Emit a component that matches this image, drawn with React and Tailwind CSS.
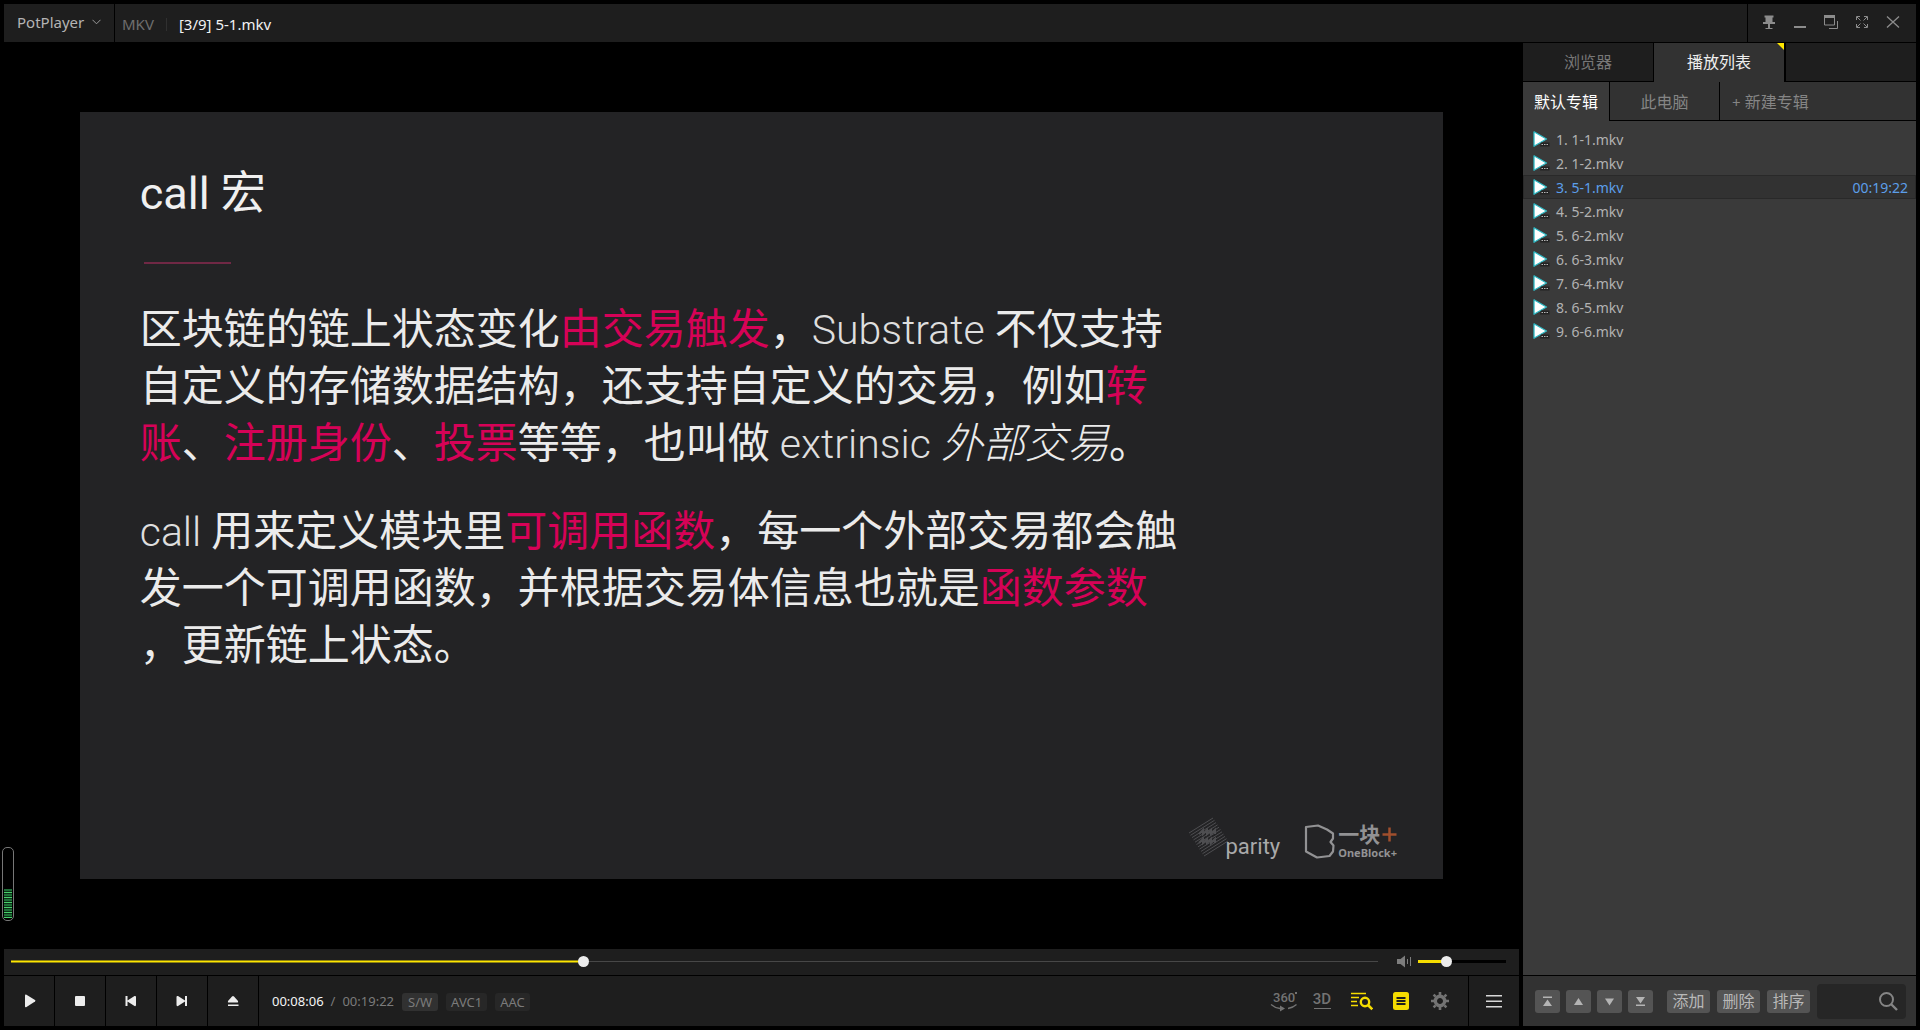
import { useState } from "react";

const UI = "font-['Noto_Sans','Noto_Sans_CJK_SC',sans-serif]";

const files = ["1-1.mkv", "1-2.mkv", "5-1.mkv", "5-2.mkv", "6-2.mkv", "6-3.mkv", "6-4.mkv", "6-5.mkv", "6-6.mkv"];
const CURRENT = 2;

function TitleButton({ label, children }) {
  return (
    <button type="button" aria-label={label} className="flex w-[31px] items-center justify-center text-[#8c8c8c]">
      <svg width="16" height="16" viewBox="0 0 16 16" fill="none" stroke="currentColor">
        {children}
      </svg>
    </button>
  );
}

function TitleBar() {
  return (
    <header className="flex h-[38px] gap-px">
      <button type="button" className="flex w-[110px] items-center gap-2 bg-[#1e1e1e] pb-0.5 pl-[13px] text-[15px] font-normal text-[#b4b4b4]">
        PotPlayer
        <svg width="9" height="6" viewBox="0 0 9 6" fill="none" stroke="#9a9a9a">
          <path d="M.5.8l4 4 4-4" />
        </svg>
      </button>
      <div className="flex flex-1 items-center bg-[#1e1e1e] pt-0.5 pl-[7px] text-[15px]">
        <span className="text-[#6e6e6e]">MKV</span>
        <span className="mx-3 h-[13px] w-px bg-[#303030]" />
        <h1 className="text-[#f2f2f2]">[3/9] 5-1.mkv</h1>
      </div>
      <div className="flex w-[168px] justify-end bg-[#1e1e1e] pr-2 pb-0.5">
        <TitleButton label="置顶">
          <path d="M3.500 1.500h9v2h-1v4.500h2.500v2H2v-2h2.500v-4.500h-1zM7 10h2v4H7zM4.500 14h7v1h-7z" fill="currentColor" stroke="none" />
        </TitleButton>
        <TitleButton label="最小化">
          <path d="M2 13h12" strokeWidth="2" />
        </TitleButton>
        <TitleButton label="还原">
          <path d="M1.500 3v8h10V3" />
          <path d="M1 2.500h11" strokeWidth="3" />
          <path d="M14.500 7v7.500H6" />
        </TitleButton>
        <TitleButton label="全屏">
          <path d="M2.500 6V2.500H6M10 2.500h3.500V6M13.500 10v3.500H10M6 13.500H2.500V10" />
          <path d="M3 3l3.500 3.500M13 3L9.500 6.500M13 13L9.500 9.500M3 13l3.500-3.500" />
        </TitleButton>
        <TitleButton label="关闭">
          <path d="M2 2.500l12 11M14 2.500l-12 11" strokeWidth="1.300" />
        </TitleButton>
      </div>
    </header>
  );
}

function Hot({ children }) {
  return <span className="text-[#d60257]">{children}</span>;
}

function Latin({ children }) {
  return <span className="text-[41px] leading-none font-light text-[#dedede]">{children}</span>;
}

function ParityLogo() {
  return (
    <div className="flex items-start">
      <svg width="40" height="40" viewBox="0 0 40 40" fill="none" stroke="#4e4e51">
        <path d="M1 16L25 1M2.500 18.300l24-15M4 20.600l24-15M5.500 22.900l24-15M7 25.200l24-15M8.500 27.500l24-15M10 29.800l24-15M11.500 32.100l24-15M13 34.400l24-15M14.500 36.700l24-15M16 39l24-15" />
        <path d="M11 17l4-4v4l4-4v4l4-4v4l4-4v4M11 26l4-4v4l4-4v4l4-4v4l4-4v4" strokeWidth="2" />
      </svg>
      <span className="-ml-0.5 pt-4 font-[Roboto] text-[22px] leading-7 text-[#a9a9aa]">parity</span>
    </div>
  );
}

function OneBlockLogo() {
  return (
    <div className="flex items-center gap-0.5 pt-[6px] font-['Noto_Sans','Noto_Sans_CJK_SC',sans-serif] font-bold text-[#929294]">
      <svg width="32" height="35" viewBox="0 0 32 35" fill="none" stroke="#929294" strokeWidth="2.200" strokeLinejoin="round">
        <path d="M2 3l12-1.500 9 4L29 9.500v5L26.500 18l3 3.500-.5 6-3.500 4.500-12.500 1.500L2 27.500z" />
      </svg>
      <div className="pt-0.5">
        <div className="flex h-5 items-center text-[21px]">
          一块
          <svg className="ml-0.5" width="15" height="15" viewBox="0 0 15 15" stroke="#a04f2d" strokeWidth="2.500">
            <path d="M7.500.5v14M.5 7.500h14" />
          </svg>
        </div>
        <div className="text-[11px] leading-4">OneBlock+</div>
      </div>
    </div>
  );
}

function Slide() {
  return (
    <article className="flex aspect-video w-[90%] flex-col bg-[#232325] pt-[54px] pr-[46px] pb-[18px] pl-[60px] font-[Roboto,'Noto_Sans_CJK_SC',sans-serif] whitespace-nowrap">
      <h2 className="pt-0.5 text-[45px] leading-[52px] text-[#f0f0f0]">call 宏</h2>
      <hr className="mt-[42px] ml-1 h-0.5 w-[87px] border-0 bg-[#702845]" />
      <p className="mt-[37px] text-[42px] leading-[57px] text-[#ebebeb]">
        区块链的链上状态变化<Hot>由交易触发</Hot>，<Latin>Substrate </Latin>不仅支持
        <br />
        自定义的存储数据结构，还支持自定义的交易，例如<Hot>转</Hot>
        <br />
        <Hot>账</Hot>、<Hot>注册身份</Hot>、<Hot>投票</Hot>等等，也叫做<Latin> extrinsic </Latin><em className="font-light">外部交易</em>。
      </p>
      <p className="mt-[31px] text-[42px] leading-[57px] text-[#ebebeb]">
        <Latin>call </Latin>用来定义模块里<Hot>可调用函数</Hot>，每一个外部交易都会触
        <br />
        发一个可调用函数，并根据交易体信息也就是<Hot>函数参数</Hot>
        <br />
        ，更新链上状态。
      </p>
      <footer className="mt-auto flex items-start justify-end gap-6">
        <ParityLogo />
        <OneBlockLogo />
      </footer>
    </article>
  );
}

function Slider({ label, value, onChange, max, fill, track }) {
  return (
    <div className="grid flex-1 items-center">
      <div className={`${track} col-start-1 row-start-1`} />
      <div className={`${fill} col-start-1 row-start-1`} style={{ width: `${(value / max) * 100}%` }} />
      <input
        type="range"
        aria-label={label}
        min="0"
        max={max}
        value={value}
        onChange={(e) => onChange(Number(e.target.value))}
        className="col-start-1 row-start-1 h-[11px] w-full appearance-none bg-transparent [&::-webkit-slider-thumb]:size-[11px] [&::-webkit-slider-thumb]:appearance-none [&::-webkit-slider-thumb]:rounded-full [&::-webkit-slider-thumb]:bg-[#ececec]"
      />
    </div>
  );
}

function SeekRow() {
  const [time, setTime] = useState(486);
  const [volume, setVolume] = useState(30);
  return (
    <div className="flex h-[26px] items-center bg-[#1e1e1e] pr-[13px] pb-0.5 pl-[7px]">
      <Slider label="进度" value={time} onChange={setTime} max={1162} fill="h-[3px] border-y border-[#8d8310] bg-[#ffe600]" track="h-px bg-[#474747]" />
      <button type="button" aria-label="静音" className="mr-1.5 ml-[18px]">
        <svg width="16" height="13" viewBox="0 0 16 13" fill="#7d7d7d">
          <path d="M1 4h3.500L9 .5v12L4.500 9H1zM11 4h1v5h-1zM14 2h1v9h-1z" />
        </svg>
      </button>
      <div className="flex w-22">
        <Slider label="音量" value={volume} onChange={setVolume} max={100} fill="h-[3px] bg-[#f5dc00]" track="h-[3px] bg-black" />
      </div>
    </div>
  );
}

const transport = [
  ["播放", "M5 3.500Q5 2 6.500 2.700L15 8q1 .8 0 1.600L6.500 15Q5 15.600 5 14.500z"],
  ["停止", "M5 4h8q1 0 1 1v8q0 1-1 1H5q-1 0-1-1V5q0-1 1-1z"],
  ["上一个", "M3.500 4h2v4.500L12.500 4q1.500-.5 1.500 1v8q0 1.500-1.500 1L5.500 9.500V14H3.500z"],
  ["下一个", "M14 4h-2v4.500L5 4Q3.500 3.500 3.500 5v8q0 1.500 1.500 1l7-4.500V14h2z"],
  ["打开", "M9 4q.5 0 1 .5l4 4.500q.5 1.500-.5 1.500h-9Q3.500 10.500 4 9l4-4.500q.5-.5 1-.5zM4 12.500h10.500v1.500H4z"],
];

function ToolButton({ label, children }) {
  return (
    <button type="button" aria-label={label} className="flex w-[39px] items-center justify-center">
      {children}
    </button>
  );
}

function Controls() {
  return (
    <div className="flex h-[50px] gap-px">
      {transport.map(([label, d]) => (
        <button key={label} type="button" aria-label={label} className="flex w-[50px] items-center justify-center bg-[#1e1e1e]">
          <svg width="18" height="18" viewBox="0 0 18 18" fill="#ececec">
            <path d={d} />
          </svg>
        </button>
      ))}
      <div className="flex flex-1 items-center bg-[#1e1e1e] pt-0.5 pl-[13px] text-[13px] text-[#7b7b7b]">
        <time className="text-[#f5f5f5]">00:08:06</time>
        <span className="mx-[7px]">/</span>
        <time>00:19:22</time>
        <span className="ml-2 rounded-[3px] bg-[#313131] px-1.5 leading-[18px]">S/W</span>
        <span className="ml-2 rounded-[3px] bg-[#272727] px-[5px] leading-[18px]">AVC1</span>
        <span className="ml-2 rounded-[3px] bg-[#272727] px-[5px] leading-[18px]">AAC</span>
      </div>
      <div className="-ml-px flex bg-[#1e1e1e] pr-[9px] text-[#737373]">
        <ToolButton label="360°">
          <svg width="28" height="22" viewBox="0 0 28 22" fill="none" stroke="currentColor">
            <text x="3" y="12" fontSize="13" fontFamily="Roboto" fontWeight="500" fill="currentColor" stroke="none">360</text>
            <rect x="25" y="2" width="2" height="2" fill="currentColor" stroke="none" />
            <path d="M1 14.500q4 3.500 9 4M18 18.500q5-.8 8.500-4" strokeWidth="1.300" />
            <path d="M10 15.500l5 3-5 3z" fill="currentColor" stroke="none" />
          </svg>
        </ToolButton>
        <ToolButton label="3D">
          <svg width="20" height="22" viewBox="0 0 20 22">
            <text x="9" y="14" textAnchor="middle" fontSize="15" fontFamily="Roboto" fontWeight="500" fill="currentColor">3D</text>
            <path d="M1 18h17v1H1z" fill="currentColor" />
          </svg>
        </ToolButton>
        <ToolButton label="搜索列表">
          <svg width="22" height="20" viewBox="0 0 22 20" fill="none" stroke="#f5dc00">
            <path d="M0 2.500h15M0 6.500h8M0 10.500h6M0 14.500h7" strokeWidth="1.300" />
            <circle cx="14" cy="11" r="4.200" strokeWidth="2.400" />
            <path d="M17 14l4.300 4.300" strokeWidth="2.600" />
          </svg>
        </ToolButton>
        <ToolButton label="播放列表">
          <svg width="16" height="18" viewBox="0 0 16 18">
            <rect width="16" height="18" rx="2.500" fill="#f5dc00" />
            <path d="M3.500 6h9M3.500 9h9M3.500 12h9" stroke="#1e1e1e" strokeWidth="2" />
          </svg>
        </ToolButton>
        <ToolButton label="设置">
          <svg width="18" height="18" viewBox="-9 -9 18 18" fill="none" stroke="currentColor">
            <circle r="4.700" strokeWidth="3.400" />
            <path d="M0-9v3M0 9v-3M-9 0h3M9 0h-3M-6.400-6.400l2 2M6.400 6.400l-2-2M-6.400 6.400l2-2M6.400-6.400l-2 2" strokeWidth="2.600" />
          </svg>
        </ToolButton>
      </div>
      <button type="button" aria-label="菜单" className="flex w-[50px] items-center justify-center bg-[#1e1e1e]">
        <svg width="16" height="14" viewBox="0 0 16 14" fill="#d8d8d8">
          <path d="M0 1h16v1.500H0zM0 6.500h16V8H0zM0 12h16v1.500H0z" />
        </svg>
      </button>
    </div>
  );
}

function FileIcon() {
  return (
    <svg width="17" height="16" viewBox="0 0 17 16">
      <path d="M1 .8L13.500 8 1 15.200z" fill="#fff" stroke="#2fb9c4" strokeWidth="1.300" strokeLinejoin="round" />
      <path d="M8 11.500h8.500v4H7z" fill="#222" />
      <path d="M8.500 13.500h7" stroke="#b5b5b5" strokeDasharray="1.500 1" />
    </svg>
  );
}

const moves = [
  ["移到顶部", "M3 2.500h9V4H3zM7.500 5.500L12 12H3z"],
  ["上移", "M7.500 4l4.500 7H3z"],
  ["下移", "M7.500 11.500L12 4.500H3z"],
  ["移到底部", "M3 12h9v-1.500H3zM7.500 9.500L12 3H3z"],
];

function Sidebar() {
  return (
    <aside className="flex w-[393px] flex-col gap-px">
      <nav className="flex h-[38px] gap-px text-[16px]">
        <button type="button" className="w-[130px] bg-[#1e1e1e] text-[#777]">浏览器</button>
        <button type="button" className="relative -mb-px w-[130px] bg-[#323232] pb-px text-[#eee]">
          播放列表
          <svg className="absolute top-0 right-0" width="7" height="7" viewBox="0 0 7 7" fill="#ffe600">
            <path d="M0 0h7v7z" />
          </svg>
        </button>
        <div className="ml-px flex-1 bg-[#1e1e1e]" />
      </nav>
      <nav className="flex h-[38px] gap-px text-[16px] text-[#858585]">
        <button type="button" className="-mb-px w-[86px] bg-[#3a3a3a] text-white">默认专辑</button>
        <button type="button" className="w-[109px] bg-[#323232] pt-px">此电脑</button>
        <button type="button" className="flex-1 bg-[#323232] pt-px pl-3 text-left"><span className="text-[15px]">+</span> 新建专辑</button>
      </nav>
      <ol className="flex-1 bg-[#3a3a3a] pt-1.5 text-[14px] text-[#b2b2b2]">
        {files.map((name, i) => (
          <li
            key={name}
            className={
              i === CURRENT
                ? "flex h-6 items-center border border-[#292929] bg-[#323232] pr-[7px] pl-[9px] text-[#5c9fea]"
                : "flex h-6 items-center border border-transparent pr-[7px] pl-[9px]"
            }
          >
            <FileIcon />
            <span className="ml-1.5 flex-1">{i + 1}. {name}</span>
            {i === CURRENT && <time>00:19:22</time>}
          </li>
        ))}
      </ol>
      <div className="flex h-[50px] items-center bg-[#323232] pr-2.5 pl-3">
        <div className="flex gap-1.5">
          {moves.map(([label, d]) => (
            <button key={label} type="button" aria-label={label} className="flex h-[23px] w-[25px] items-center justify-center rounded-[3px] bg-[#545454]">
              <svg width="15" height="15" viewBox="0 0 15 15" fill="#b4b4b4">
                <path d={d} />
              </svg>
            </button>
          ))}
        </div>
        <div className="ml-3.5 flex gap-[7px] text-[16px] leading-[23px] text-[#b8b8b8]">
          <button type="button" className="h-[23px] w-[43px] rounded-[3px] bg-[#545454]">添加</button>
          <button type="button" className="h-[23px] w-[43px] rounded-[3px] bg-[#545454]">删除</button>
          <button type="button" className="h-[23px] w-[43px] rounded-[3px] bg-[#545454]">排序</button>
        </div>
        <label className="ml-[7px] flex h-[35px] flex-1 items-center rounded-[4px] bg-[#262626] pr-2 pl-2">
          <input type="search" aria-label="搜索" className="w-0 flex-1 bg-transparent text-[14px] text-[#b2b2b2] outline-none" />
          <svg width="20" height="20" viewBox="0 0 20 20" fill="none" stroke="#858585" strokeWidth="2">
            <circle cx="8.500" cy="8.500" r="6.500" />
            <path d="M13 13l6 6" strokeWidth="2.400" />
          </svg>
        </label>
      </div>
    </aside>
  );
}

function LevelMeter() {
  return (
    <div className="absolute bottom-[109px] left-0.5 flex h-[74px] w-3 flex-col justify-end rounded-[5px] border border-[#777] px-px pb-0.5">
      <div className="h-[29px] bg-[repeating-linear-gradient(to_bottom,#1f7038_0px,#1f7038_2px,#0c3017_2px,#0c3017_3px,#49d06c_3px,#49d06c_4px,#0c3017_4px,#0c3017_5px)]" />
    </div>
  );
}

export default function App() {
  return (
    <div className={`${UI} relative flex h-screen flex-col gap-px bg-black p-1`}>
      <TitleBar />
      <div className="flex min-h-0 flex-1 gap-1">
        <main className="flex min-w-0 flex-1 flex-col gap-px">
          <div className="flex min-h-0 flex-1 items-center justify-center">
            <Slide />
          </div>
          <SeekRow />
          <Controls />
        </main>
        <Sidebar />
      </div>
      <LevelMeter />
    </div>
  );
}
